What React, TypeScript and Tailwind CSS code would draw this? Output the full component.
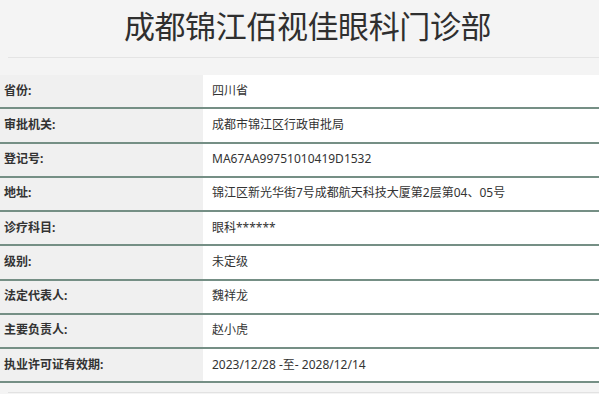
import React from 'react';

const rows: { label: string; value: string }[] = [
    { label: '省份:', value: '四川省' },
    { label: '审批机关:', value: '成都市锦江区行政审批局' },
    { label: '登记号:', value: 'MA67AA99751010419D1532' },
    { label: '地址:', value: '锦江区新光华街7号成都航天科技大厦第2层第04、05号' },
    { label: '诊疗科目:', value: '眼科******' },
    { label: '级别:', value: '未定级' },
    { label: '法定代表人:', value: '魏祥龙' },
    { label: '主要负责人:', value: '赵小虎' },
    { label: '执业许可证有效期:', value: '2023/12/28 -至- 2028/12/14' },
];

function App() {
    return (
        <div
            className="min-h-screen bg-[#f4f4f4] text-[#333]"
            style={{ fontFamily: '"Noto Sans", "Noto Sans CJK SC", sans-serif' }}
        >
            <div className="pl-4 h-[57px] pb-1 flex items-center justify-center">
                <h1 className="text-[31px] leading-none tracking-[-0.4px] font-normal text-[#2f2f2f]">
                    成都锦江佰视佳眼科门诊部
                </h1>
            </div>
            <div className="ml-2 h-px bg-[#e4e4e4]" />
            <div className="mt-[17px]">
                {rows.map((r) => (
                    <Row key={r.label} label={r.label} value={r.value} />
                ))}
            </div>
            <div className="ml-2 mt-[9px] h-px bg-[#e2e2e2]" />
        </div>
    );
}

const Row: React.FC<{ label: string; value: string }> = ({ label, value }) => (
    <div className="flex h-[34.25px] border-b-2 border-[#758f85]">
        <div className="w-[203px] bg-[#f0f0f0] pl-1 pb-px flex items-center text-[12px] font-bold text-[#333]">
            {label}
        </div>
        <div className="flex-1 bg-white pl-[9px] pb-px flex items-center text-[12px] text-[#333]">{value}</div>
    </div>
);

export default App;
